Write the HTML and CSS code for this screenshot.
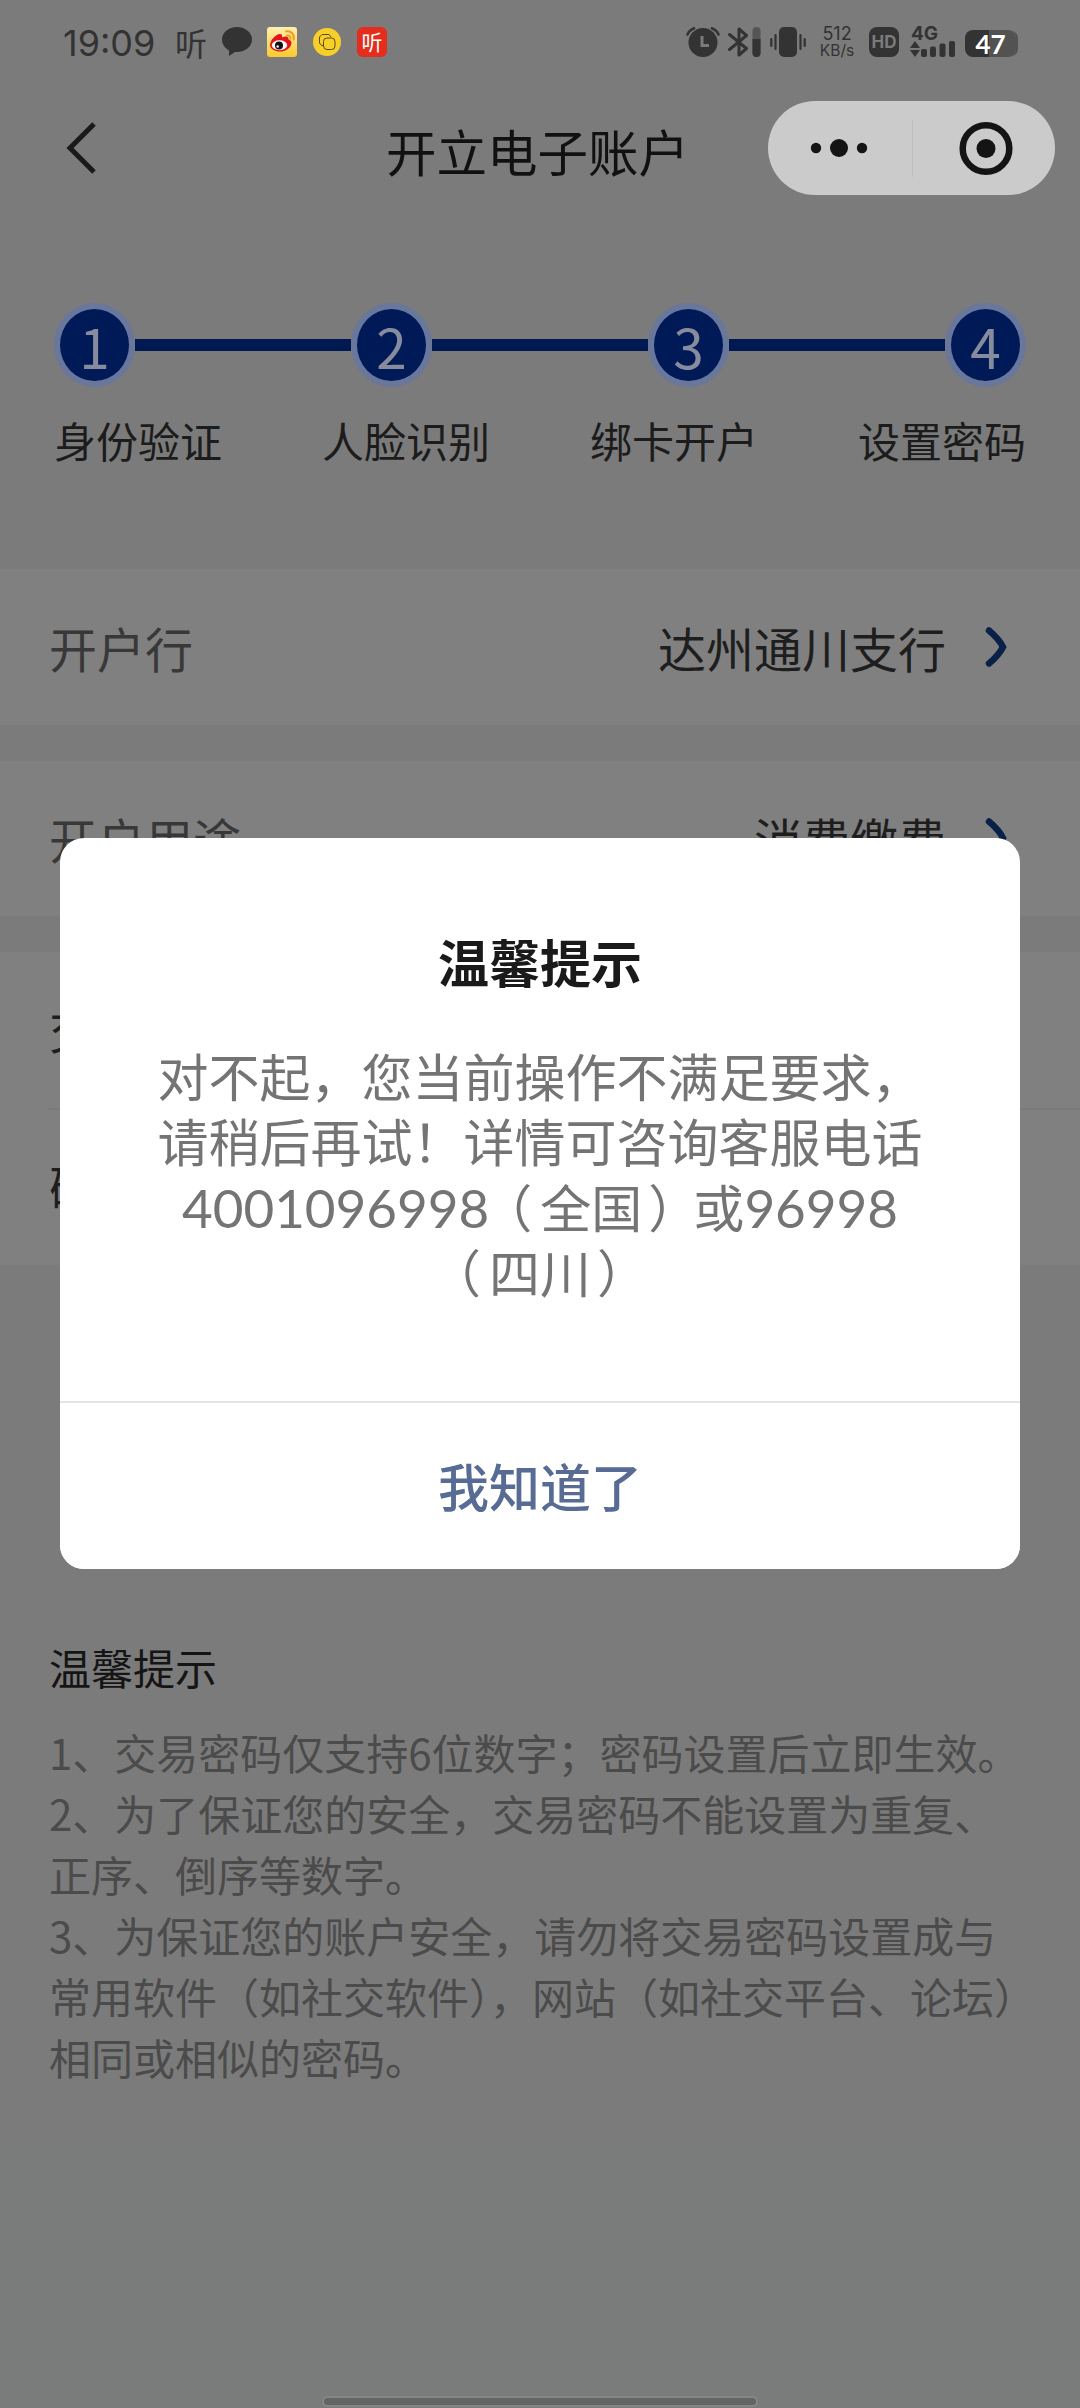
FILE: index.html
```html
<!DOCTYPE html>
<html lang="zh-CN">
<head>
    <meta charset="UTF-8">
    <meta name="viewport" content="width=device-width, initial-scale=1.0">
    <title>开立电子账户</title>
    <link rel="stylesheet" href="styles.css">
</head>
<body>
<div class="page">
    <!-- Status bar -->
    <div class="status-bar">
        <div class="status-left">
            <span class="time">19:09</span>
            <span class="listen">听</span>
            <svg class="bubble" width="30" height="30" viewBox="0 0 30 30">
                <path d="M15 0C6.500 0 0 5.600 0 12.600c0 4.600 2.800 8.600 7 10.800V29l6-4c.7.1 1.300.1 2 .1 8.500 0 15-5.600 15-12.500S23.500 0 15 0z" fill="#333"/>
            </svg>
            <svg class="weibo" width="30" height="30" viewBox="0 0 30 30">
                <defs>
                    <linearGradient id="wb" x1="0" y1="0" x2="0" y2="1">
                        <stop offset="0" stop-color="#fff0b0"/>
                        <stop offset="1" stop-color="#fbc92c"/>
                    </linearGradient>
                </defs>
                <rect width="30" height="30" rx="3" fill="url(#wb)"/>
                <path d="M3 18c0-5 6-11 10-11 2 0 2.500 1.500 2 3.500 3-1.500 7-1.500 6.500 2 3 1 3.500 3 2.500 5.500-1.500 4-6 6.500-11 6.500S3 22 3 18z" fill="#e0161b"/>
                <ellipse cx="12.500" cy="18.300" rx="7.600" ry="5" fill="#fff"/>
                <circle cx="12" cy="18.500" r="4" fill="#111"/>
                <circle cx="10.700" cy="19.500" r="1.200" fill="#fff"/>
                <path d="M19 4.500c5-1 9 3 7.500 8M20 8.500c2.500-.5 4 1.500 3.200 3.500" fill="none" stroke="#f39a1e" stroke-width="1.900" stroke-linecap="round"/>
            </svg>
            <svg class="coin" width="28" height="28" viewBox="0 0 28 28">
                <circle cx="14" cy="14" r="14" fill="#f6cf2a"/>
                <path d="M10.500 17.500H8.500L6.500 15V9l2.500-2.500h7l2 2.500" fill="none" stroke="#5b4a10" stroke-width="1"/>
                <rect x="10.500" y="10" width="11.500" height="11.500" rx="3.500" fill="none" stroke="#5b4a10" stroke-width="1"/>
            </svg>
            <span class="listen-app">听</span>
        </div>
        <div class="status-right">
            <svg width="34" height="30" viewBox="0 0 34 30">
                <circle cx="17" cy="15.500" r="14.500" fill="#333"/>
                <path d="M1.500 7.500Q3.500 3 8 1.300M32.500 7.500Q30.500 3 26 1.300" fill="none" stroke="#333" stroke-width="2.600" stroke-linecap="round"/>
                <path d="M16 9v9.500h7" fill="none" stroke="#7b7b7b" stroke-width="3"/>
            </svg>
            <svg class="bluetooth" width="33" height="30" viewBox="0 0 33 30">
                <path d="M1.500 7.500L18.500 21.500 11 28V2l7.500 6.500L1.500 22.500" fill="none" stroke="#333" stroke-width="3" stroke-linejoin="round" stroke-linecap="round"/>
                <rect x="24.500" y="0" width="8" height="30" rx="4" fill="#555"/>
                <path d="M24.500 12h8v14a4 4 0 0 1-8 0z" fill="#333"/>
            </svg>
            <svg class="vibrate" width="36" height="30" viewBox="0 0 36 30">
                <rect x="9" y="0" width="18" height="30" rx="5" fill="#333"/>
                <path d="M1.300 12v7M5.500 8v14M30.500 8v14M34.700 12v7" stroke="#333" stroke-width="2.200" stroke-linecap="round"/>
            </svg>
            <div class="speed"><span>512</span><span class="unit">KB/s</span></div>
            <span class="hd">HD</span>
            <div class="signal">
                <span class="net">4G</span>
                <svg width="46" height="16" viewBox="0 0 46 16">
                    <path d="M0 7l5-7 5 7zM0 9h10l-5 7z" fill="#333"/>
                    <rect x="11" y="8" width="6" height="8" rx="2" fill="#333"/>
                    <rect x="20" y="5.500" width="6" height="10.500" rx="2" fill="#333"/>
                    <rect x="29.500" y="2.500" width="6" height="13.500" rx="2" fill="#333"/>
                    <rect x="39" y="0" width="6" height="16" rx="2" fill="#333"/>
                </svg>
            </div>
            <div class="battery"><span>47</span></div>
        </div>
    </div>

    <!-- Title bar -->
    <div class="nav">
        <svg class="back" width="32" height="56" viewBox="0 0 32 56">
            <path d="M29 4L5 28l24 24" fill="none" stroke="#1a1a1a" stroke-width="5"/>
        </svg>
        <h1>开立电子账户</h1>
        <div class="capsule">
            <svg width="144" height="94" viewBox="0 0 144 94">
                <circle cx="48" cy="47" r="5.200" fill="#141414"/>
                <circle cx="71" cy="47" r="9" fill="#141414"/>
                <circle cx="94" cy="47" r="5.200" fill="#141414"/>
            </svg>
            <div class="capsule-line"></div>
            <svg width="142" height="94" viewBox="0 0 142 94">
                <circle cx="73" cy="47.500" r="23.300" fill="none" stroke="#141414" stroke-width="6.500"/>
                <circle cx="73" cy="47.500" r="9.500" fill="#141414"/>
            </svg>
        </div>
    </div>

    <!-- Steps -->
    <div class="steps">
        <div class="step-line">
            <span class="dot">1</span><i></i>
            <span class="dot">2</span><i></i>
            <span class="dot">3</span><i></i>
            <span class="dot">4</span>
        </div>
        <div class="step-names">
            <span>身份验证</span>
            <span>人脸识别</span>
            <span>绑卡开户</span>
            <span>设置密码</span>
        </div>
    </div>

    <!-- Form -->
    <div class="group">
        <div class="row">
            <span class="label">开户行</span>
            <span class="value">达州通川支行</span>
            <svg class="arrow" width="26" height="44" viewBox="0 0 26 44">
                <path d="M5 5.500Q15 14 19 22 15 30 5 38.500" fill="none" stroke="#0a2147" stroke-width="6.500" stroke-linecap="round"/>
            </svg>
        </div>
    </div>
    <div class="group">
        <div class="row">
            <span class="label">开户用途</span>
            <span class="value">消费缴费</span>
            <svg class="arrow" width="26" height="44" viewBox="0 0 26 44">
                <path d="M5 5.500Q15 14 19 22 15 30 5 38.500" fill="none" stroke="#0a2147" stroke-width="6.500" stroke-linecap="round"/>
            </svg>
        </div>
    </div>
    <div class="group password">
        <div class="row"><span class="label dark">交易密码</span></div>
        <div class="row bordered"><span class="label dark">确认密码</span></div>
    </div>

    <!-- Tips -->
    <div class="tips">
        <h2>温馨提示</h2>
        <p>1、交易密码仅支持6位数字；密码设置后立即生效。</p>
        <p>2、为了保证您的安全，交易密码不能设置为重复、<br>正序、倒序等数字。</p>
        <p>3、为保证您的账户安全，请勿将交易密码设置成与<br>常用软件（如社交软件），网站（如社交平台、论坛）<br>相同或相似的密码。</p>
    </div>

    <div class="footer"><div class="home-bar"></div></div>
</div>

<!-- Dialog -->
<div class="modal">
    <h3>温馨提示</h3>
    <p>对不起，您当前操作不满足要求，<br>请稍后再试！详情可咨询客服电话<br><span class="num">4001096998</span><span class="open">（</span>全国<span class="close">）</span>或<span class="num">96998</span><br><span class="open">（</span>四川<span class="close">）</span></p>
    <button class="modal-btn">我知道了</button>
</div>
</body>
</html>
```
FILE: styles.css
```css
* {
    box-sizing: border-box;
    margin: 0;
    padding: 0;
}

body {
    width: 1080px;
    height: 2408px;
    overflow: hidden;
    background: #7b7b7b;
    font-family: "Noto Sans CJK SC", sans-serif;
}

svg {
    display: block;
    flex: none;
}

.page {
    height: 2408px;
    display: flex;
    flex-direction: column;
    white-space: nowrap;
}

/* Status bar */
.status-bar {
    height: 84px;
    padding: 0 61px 0 63px;
    display: flex;
    justify-content: space-between;
    align-items: center;
    color: #333;
}

.status-left,
.status-right {
    display: flex;
    align-items: center;
}

.time {
    width: 112px;
    font: 36px/40px Inter, sans-serif;
    padding-top: 1px;
}

.listen {
    width: 47px;
    font-size: 32px;
    line-height: 30px;
}

.weibo {
    margin-left: 15px;
}

.coin {
    margin: 0 16px;
}

.listen-app {
    width: 30px;
    height: 30px;
    border-radius: 6px;
    background: #e42d1c;
    color: #fff;
    font-size: 21px;
    line-height: 28px;
    text-align: center;
}

.bluetooth {
    margin-left: 8px;
}

.vibrate {
    margin-left: 9px;
}

.speed {
    width: 38px;
    margin-left: 12px;
    display: flex;
    flex-direction: column;
    align-items: center;
    font: 18px/16px Inter, sans-serif;
}

.speed .unit {
    font-size: 15.500px;
    line-height: 17px;
}

.hd {
    width: 30px;
    height: 30px;
    margin-left: 13px;
    border-radius: 8px;
    background: #333;
    color: #7b7b7b;
    font: bold 17px/30px Inter, sans-serif;
    text-align: center;
}

.signal {
    width: 46px;
    height: 30px;
    margin-left: 11px;
    display: flex;
    flex-direction: column;
    justify-content: space-between;
}

.net {
    font: bold 19px/14px Inter, sans-serif;
    padding-left: 1px;
}

.battery {
    width: 51px;
    height: 27px;
    margin: 3px 3px 0 9px;
    border-radius: 8px;
    background: linear-gradient(to right, #333 47%, #525252 47%);
    box-shadow: 3px 0 0 -1px #525252;
    color: #fff;
    font: bold 26px/28px Lato, sans-serif;
    text-align: center;
}

/* Title bar */
.nav {
    height: 128px;
    padding: 0 25px 0 65px;
    display: flex;
    align-items: center;
}

.nav h1 {
    margin-left: 289px;
    padding-top: 3px;
    font-size: 50.500px;
    font-weight: normal;
    line-height: 60px;
    color: #111;
}

.capsule {
    width: 287px;
    height: 94px;
    margin-left: auto;
    display: flex;
    align-items: center;
    border-radius: 47px;
    background: #cbcbcb;
}

.capsule-line {
    width: 1px;
    height: 57px;
    background: #bdbdbd;
}

/* Steps */
.steps {
    height: 357px;
    padding: 91px 54px 0;
}

.step-line {
    display: flex;
    align-items: center;
}

.step-line i {
    flex: 1;
    height: 12px;
    background: #001952;
}

.dot {
    width: 81px;
    height: 84px;
    border: 6px solid #68779b;
    border-radius: 50%;
    background: #001957;
    color: #868b9e;
    font-size: 55px;
    line-height: 72px;
    text-align: center;
}

.step-names {
    margin-top: 22px;
    display: flex;
    justify-content: space-between;
    font-size: 42px;
    line-height: 62px;
    color: #1c1c1c;
}

/* Form */
.group {
    margin-bottom: 36px;
    background: #808080;
}

.row {
    height: 155.500px;
    padding: 0 70px 0 49px;
    display: flex;
    align-items: center;
    font-size: 48px;
}

.password .row {
    padding-bottom: 3px;
}

.row.bordered {
    height: 157px;
    background: linear-gradient(#7a7a7a, #7a7a7a) 48px 0 / 100% 2px no-repeat;
}

.label {
    color: #383838;
}

.label.dark {
    color: #1e1e1e;
}

.value {
    margin-left: auto;
    color: #1e1e1e;
}

.arrow {
    margin-left: 38px;
}

/* Tips */
.tips {
    height: 842px;
    padding: 335px 0 0 49px;
    font-size: 42px;
    line-height: 61px;
    color: #4b4b4b;
}

.tips h2 {
    margin-bottom: 24px;
    font-size: 42px;
    font-weight: normal;
    color: #151515;
}

.footer {
    flex: 1;
    display: flex;
    justify-content: center;
    align-items: flex-end;
    background: #7a7c7b;
}

.home-bar {
    width: 436px;
    height: 11px;
    margin-bottom: 1px;
    border: 2px solid #848685;
    border-radius: 6px;
    background: #636564;
}

/* Dialog, sits over the page */
.modal {
    position: absolute;
    top: 838px;
    left: 60px;
    width: 960px;
    height: 731px;
    display: flex;
    flex-direction: column;
    border-radius: 24px;
    background: #fff;
    overflow: hidden;
    text-align: center;
    white-space: nowrap;
}

.modal h3 {
    margin-top: 88px;
    font-size: 51px;
    line-height: 70px;
    color: #1a1a1a;
}

.modal p {
    margin-top: 47px;
    font-size: 51px;
    line-height: 65.300px;
    color: #747474;
}

.modal .num {
    font-family: Lato, sans-serif;
    font-size: 53px;
    line-height: 1;
}

.modal .open {
    margin: 0 8px 0 -8px;
}

.modal .close {
    margin: 0 -6px 0 6px;
}

.modal-btn {
    height: 168px;
    margin-top: auto;
    padding-bottom: 3px;
    border: none;
    border-top: 2px solid #e5e5e5;
    background: #fff;
    font-family: inherit;
    font-size: 51px;
    font-weight: 500;
    color: #576b95;
}
```
